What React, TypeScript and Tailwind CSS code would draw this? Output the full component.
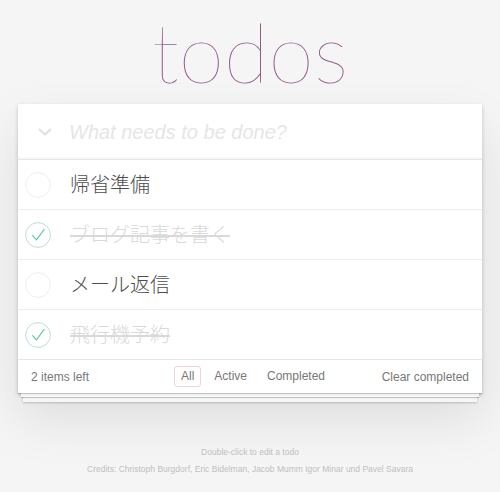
import React from "react";

// ============================================================
// TODOS (TodoMVC-like)
// ============================================================

interface Todo {
  title: string;
  completed: boolean;
}

const todoList: Todo[] = [
  { title: "帰省準備", completed: false },
  { title: "ブログ記事を書く", completed: true },
  { title: "メール返信", completed: false },
  { title: "飛行機予約", completed: true },
];

const sans = "font-['Liberation_Sans','Helvetica_Neue',Arial,sans-serif]";
const jp =
  "font-['Liberation_Sans','Noto_Sans_CJK_JP','Noto_Sans_CJK_SC',sans-serif]";

function Toggle({ checked }: { checked: boolean }) {
  return (
    <svg width="30" height="30" viewBox="0 0 40 40" className="shrink-0">
      <circle
        cx="20"
        cy="20"
        r="16.5"
        fill="none"
        stroke={checked ? "#bddad5" : "#ededed"}
        strokeWidth="1.3"
      />
      {checked && (
        <path
          d="M12.5 20.5 L18 26.5 L28.5 12"
          fill="none"
          stroke="#5dc2af"
          strokeWidth="1.6"
        />
      )}
    </svg>
  );
}

function TodoRow({ todo, last }: { todo: Todo; last: boolean }) {
  return (
    <li
      className={`flex items-center pl-[5px] ${last ? "h-[49px]" : "h-[50px] border-b border-[#ededed]"}`}
    >
      <Toggle checked={todo.completed} />
      <span
        className={`ml-[17px] text-[20px] font-light ${jp} ${
          todo.completed
            ? "text-[#d9d9d9] line-through decoration-[#d9d9d9]"
            : "text-[#4d4d4d]"
        }`}
      >
        {todo.title}
      </span>
    </li>
  );
}

export default function App() {
  const filterList = ["All", "Active", "Completed"];

  return (
    <div className={`min-h-[492px] w-full bg-[#f5f5f5] ${sans}`}>
      <h1 className="pt-[11px] text-center font-['Lato','Roboto',sans-serif] text-[82px] font-thin leading-[80px] text-[#8f5889]">
        todos
      </h1>

      <section className="mx-auto mt-[13px] w-[464px] bg-white shadow-[0_2px_4px_0_rgba(0,0,0,0.2),0_25px_50px_0_rgba(0,0,0,0.1)]">
        <header className="flex h-[55px] items-center shadow-[inset_0_-2px_1px_rgba(0,0,0,0.03)]">
          <div className="flex w-[51px] justify-center pl-[2px]">
            <svg width="14" height="8" viewBox="0 0 14 8">
              <path
                d="M1 1 L7 6.5 L13 1"
                fill="none"
                stroke="#dedede"
                strokeWidth="2"
              />
            </svg>
          </div>
          <span className="text-[20px] font-light italic text-[#e6e6e6]">
            What needs to be done?
          </span>
        </header>

        <ul className="border-t border-[#e6e6e6]">
          {todoList.map((todo, i) => (
            <TodoRow
              key={todo.title}
              todo={todo}
              last={i === todoList.length - 1}
            />
          ))}
        </ul>

        <footer className="grid h-[34px] grid-cols-[1fr_auto_1fr] items-center border-t border-[#e6e6e6] px-[13px] text-[12px] text-[#777] shadow-[0_1px_1px_rgba(0,0,0,0.2),0_7px_0_-3px_#f6f6f6,0_8px_1px_-3px_rgba(0,0,0,0.2),0_14px_0_-5px_#f6f6f6,0_15px_2px_-5px_rgba(0,0,0,0.2)]">
          <span>2 items left</span>
          <ul className="ml-[6px] flex gap-[6px]">
            {filterList.map((label) => (
              <li
                key={label}
                className={`rounded-[3px] border px-[6px] py-[2px] leading-[15px] ${
                  label === "All"
                    ? "border-[rgba(175,47,47,0.2)]"
                    : "border-transparent"
                }`}
              >
                {label}
              </li>
            ))}
          </ul>
          <span className="text-right">Clear completed</span>
        </footer>
      </section>

      <div className="mt-[51px] text-center text-[8.5px] leading-[17px] text-[#bfbfbf]">
        <p>Double-click to edit a todo</p>
        <p>
          <span className="font-light">Credits: </span>
          Christoph Burgdorf, Eric Bidelman, Jacob Mumm Igor Minar
          <span className="font-light"> und </span>
          Pavel Savara
        </p>
      </div>
    </div>
  );
}
